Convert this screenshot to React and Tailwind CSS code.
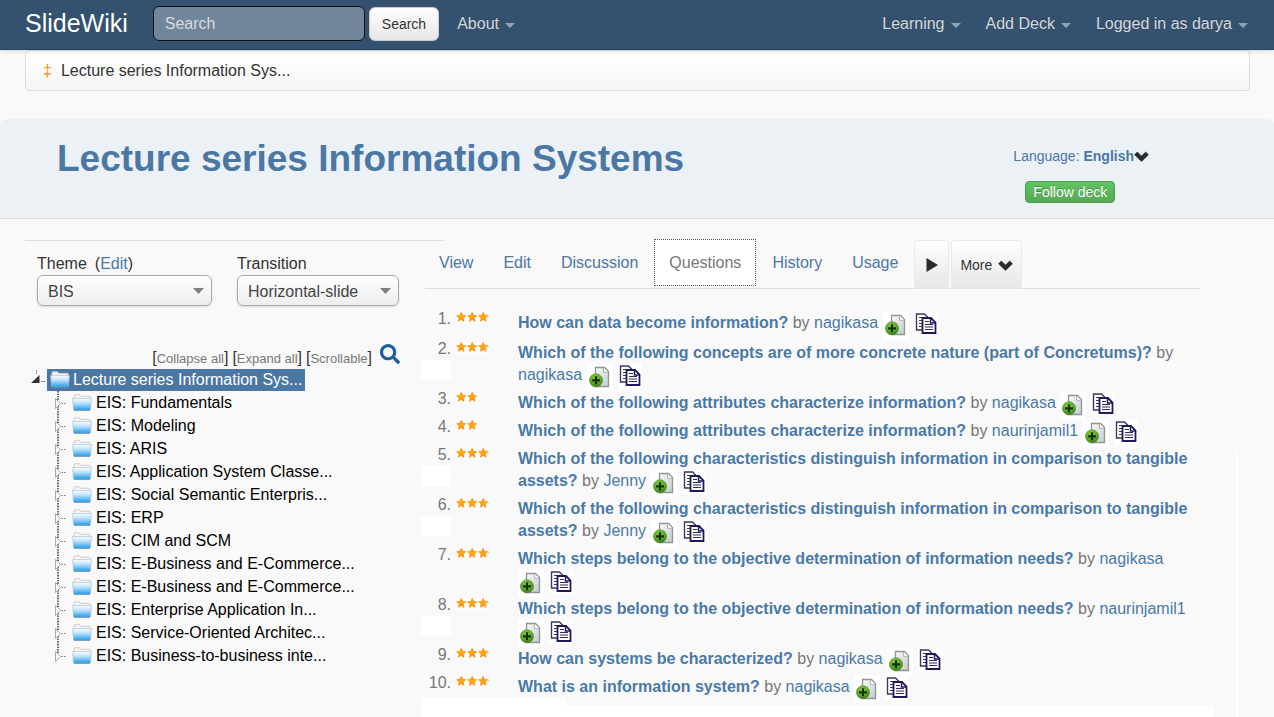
import React from "react";
import { FaSearch } from "react-icons/fa";

const questions = [
  { title: "How can data become information?", user: "nagikasa", stars: 3 },
  { title: "Which of the following concepts are of more concrete nature (part of Concretums)?", user: "nagikasa", stars: 3, filler: true },
  { title: "Which of the following attributes characterize information?", user: "nagikasa", stars: 2 },
  { title: "Which of the following attributes characterize information?", user: "naurinjamil1", stars: 2 },
  { title: "Which of the following characteristics distinguish information in comparison to tangible assets?", user: "Jenny", stars: 3, filler: true },
  { title: "Which of the following characteristics distinguish information in comparison to tangible assets?", user: "Jenny", stars: 3, filler: true },
  { title: "Which steps belong to the objective determination of information needs?", user: "nagikasa", stars: 3 },
  { title: "Which steps belong to the objective determination of information needs?", user: "naurinjamil1", stars: 3, filler: true },
  { title: "How can systems be characterized?", user: "nagikasa", stars: 3 },
  { title: "What is an information system?", user: "nagikasa", stars: 3 },
];

const chapters = [
  "EIS: Fundamentals",
  "EIS: Modeling",
  "EIS: ARIS",
  "EIS: Application System Classe...",
  "EIS: Social Semantic Enterpris...",
  "EIS: ERP",
  "EIS: CIM and SCM",
  "EIS: E-Business and E-Commerce...",
  "EIS: E-Business and E-Commerce...",
  "EIS: Enterprise Application In...",
  "EIS: Service-Oriented Architec...",
  "EIS: Business-to-business inte...",
];

function Caret() {
  return (
    <svg width="10" height="5" viewBox="0 0 10 5" className="mt-1 shrink-0" aria-hidden="true">
      <path d="M0 0h10L5 5z" fill="#93a3b3" />
    </svg>
  );
}

function Chevron() {
  return (
    <svg width="15" height="11" viewBox="0 0 15 11" className="shrink-0" aria-hidden="true">
      <path d="M.5 3.8 3.3 1l4.2 4L11.7 1l2.8 2.8-7 6.7z" fill="#2b2b2b" stroke="#2b2b2b" strokeWidth=".6" strokeLinejoin="round" />
    </svg>
  );
}

function Folder() {
  return (
    <svg width="20" height="18" viewBox="0 0 20 18" className="shrink-0" aria-hidden="true">
      <defs>
        <linearGradient id="folder" x1="0" y1="0" x2="0" y2="1">
          <stop offset="0" stopColor="#fafdff" />
          <stop offset=".4" stopColor="#bfe2fa" />
          <stop offset="1" stopColor="#1f9bec" />
        </linearGradient>
      </defs>
      <path d="M2 5V1.700Q2 .8 3 .8h4.200L9 2.300h8.300q1 0 1 1v2" fill="#f4f4f4" stroke="#c8c8c8" strokeWidth=".9" />
      <path d="M.6 4.500h18.800l-.9 10.800q0 .9-1 .9h-15q-1 0-1-.9z" fill="url(#folder)" stroke="#9dbdd4" strokeWidth=".6" />
      <path d="M2 16.300h16" stroke="#5d87a6" strokeWidth=".8" />
    </svg>
  );
}

function Stars({ count }) {
  return (
    <svg width={count === 3 ? 33 : 22} height="11" viewBox={count === 3 ? "0 1 33 11" : "0 1 22 11"} className="bg-white" role="img" aria-label={count + " stars"}>
      <defs>
        <linearGradient id="star" x1="0" y1="0" x2="0" y2="1">
          <stop offset="0" stopColor="#ff7a1a" />
          <stop offset=".5" stopColor="#ffb000" />
          <stop offset="1" stopColor="#ff7a1a" />
        </linearGradient>
      </defs>
      {[0, 1, 2].slice(0, count).map((i) => (
        <path
          key={i}
          transform={"translate(" + i * 11 + " 0)"}
          d="M5.200 1.200 6.600 4.300l3.300.4-2.600 2.300.8 3.400-2.900-1.800-2.900 1.800.8-3.400L.5 4.700l3.300-.4z"
          fill="url(#star)"
          stroke="#ff9020"
          strokeWidth=".7"
        />
      ))}
      {count === 3 && <path d="M32 5h1v1h-1z" fill="#ffb070" />}
    </svg>
  );
}

function AddIcon() {
  return (
    <svg width="26" height="27" viewBox="0 1 26 27" className="shrink-0 bg-white" aria-hidden="true">
      <defs>
        <linearGradient id="sheet" x1="0" y1="0" x2="1" y2="1">
          <stop offset="0" stopColor="#fafafa" />
          <stop offset="1" stopColor="#c3caca" />
        </linearGradient>
        <radialGradient id="ball" cx=".45" cy=".35" r=".7">
          <stop offset="0" stopColor="#8fd045" />
          <stop offset=".6" stopColor="#5aa822" />
          <stop offset="1" stopColor="#2f6d10" />
        </radialGradient>
      </defs>
      <path d="M8.500 4.500h9l4 4v15h-13z" fill="url(#sheet)" stroke="#8e9595" strokeWidth="1.300" />
      <path d="M16.500 4.800v4.500h4.700" fill="#fff" stroke="#a0a6a6" strokeWidth=".8" />
      <circle cx="9" cy="17.300" r="6.600" fill="url(#ball)" stroke="#5f8f3c" strokeWidth=".6" />
      <path d="M9 13.300v8M5 17.300h8" stroke="#14320a" strokeWidth="2.200" />
    </svg>
  );
}

function CopyIcon() {
  return (
    <svg width="24" height="24" viewBox="0 1 24 24" className="shrink-0 bg-white" aria-hidden="true">
      <path d="M2.500 3h8l3.500 3.500v12.500H2.500z" fill="#fff" stroke="#3a3764" strokeWidth="1.400" />
      <path d="M5 6.500h3.500M5 9.500h3.500M5 12.500h3.500M5 15.500h3.500" stroke="#3a3764" strokeWidth="1.200" />
      <path d="M8.500 7h8.500l4.500 4.500v10.500h-13z" fill="#fff" stroke="#1f1a5c" strokeWidth="1.800" />
      <path d="M16.500 7v5h5" fill="none" stroke="#1f1a5c" strokeWidth="1.500" />
      <path d="M11 10.500h4M11 13.500h8M11 16h8M11 18.500h8" stroke="#2f2b60" strokeWidth="1.200" />
    </svg>
  );
}

function NavItem({ children }) {
  return (
    <a href="#" className="flex items-center gap-1.5 text-[#d5d9dd] [text-shadow:0_-1px_0_rgba(0,0,0,0.25)]">
      {children}
      <Caret />
    </a>
  );
}

function Picker({ id, value, className }) {
  return (
    <div className={"relative " + className}>
      <select
        id={id}
        defaultValue={value}
        className="block h-[31px] w-full appearance-none rounded-md border border-[#aaa] bg-linear-to-b from-white via-[#f6f6f6] to-[#eee] px-2.5 pt-0.5 text-base text-[#444] shadow-sm"
      >
        <option>{value}</option>
      </select>
      <svg width="11" height="6" viewBox="0 0 11 6" className="pointer-events-none absolute top-[13px] right-2" aria-hidden="true">
        <path d="M0 0h11L5.500 6z" fill="#808080" />
      </svg>
    </div>
  );
}

function Tab({ children, active }) {
  return (
    <a
      href="#"
      className={
        active
          ? "h-[47px] border border-dotted border-[#555] bg-white px-3.5 leading-[45px] text-[#777]"
          : "h-[47px] px-3.5 leading-[47px]"
      }
    >
      {children}
    </a>
  );
}

function Sidebar() {
  return (
    <aside className="mt-px w-[418px] shrink-0 border-t border-[#ddd] pt-3 pl-3 text-[#333]">
      <div className="flex gap-[25px]">
        <div>
          <div className="flex gap-2 leading-[22px]">
            <label htmlFor="theme">Theme</label>
            <span>(<a href="#" className="text-[#4a79a8]">Edit</a>)</span>
          </div>
          <Picker id="theme" value="BIS" className="w-[175px]" />
        </div>
        <div>
          <label htmlFor="transition" className="block leading-[22px]">Transition</label>
          <Picker id="transition" value="Horizontal-slide" className="w-[162px]" />
        </div>
      </div>

      <div className="mt-[37px] flex h-[26px] justify-end gap-2 pr-[43px]">
        <div className="flex items-end gap-1 leading-[20px]">
          {["Collapse all", "Expand all", "Scrollable"].map((label) => (
            <span key={label}>
              [<button type="button" className="text-[13px] leading-[20px] text-[#777]">{label}</button>]
            </span>
          ))}
        </div>
        <button type="button" aria-label="Search the tree" className="flex h-[22px] items-center text-[#1c5c9f]">
          <FaSearch size={20} />
        </button>
      </div>

      <div className="-ml-1.5 text-black">
        <div className="flex h-[22px] items-center">
          <svg width="16" height="22" viewBox="0 0 16 22" aria-hidden="true">
            <path d="M5.500 1v5" stroke="#777" strokeDasharray="1.500 1" />
            <path d="M8.500 6v8H0z" fill="#333" />
            <path d="M10 12.500h4" stroke="#555" strokeDasharray="1.500 1" />
          </svg>
          <a href="#" className="flex h-[22px] items-center gap-[3px] bg-[#4b77a5] px-[3px] text-white">
            <Folder />
            Lecture series Information Sys...
          </a>
        </div>
        <ul className="pl-[22px]">
          {chapters.map((name, i) => (
            <li key={i} className="flex h-[23px] items-center">
              <svg width="19" height="23" viewBox="0 0 19 23" aria-hidden="true">
                <path d={i === chapters.length - 1 ? "M5 0v13" : "M5 0v23"} stroke="#444" strokeWidth="1.500" strokeDasharray="1.500 1" />
                <path d="M2.500 7.500v10l5-5z" fill="#f9f9f9" stroke="#aaa" />
                <path d="M8.500 12.500h5" stroke="#777" strokeDasharray="1.500 1" />
              </svg>
              <a href="#" className="flex items-center gap-1">
                <Folder />
                {name}
              </a>
            </li>
          ))}
        </ul>
      </div>
    </aside>
  );
}

function Question({ number, title, user, stars, filler }) {
  return (
    <li className="flex pb-1.5 first:pb-2 last:pb-0">
      <div className="flex w-[30px] shrink-0 flex-col items-end">
        <span className="-mt-1 leading-[22px] whitespace-nowrap">{number}.</span>
        {filler && <span className="h-5 w-[30px] bg-white" />}
      </div>
      <div className="w-[67px] shrink-0 pl-[5px]">
        <Stars count={stars} />
      </div>
      <div className="min-w-0 flex-1 leading-[22px]">
        <a href="#" className="font-bold text-[#4a79a8]">{title}</a> by{" "}
        <a href="#" className="text-[#4a79a8]">{user}</a>{" "}
        <span className="inline-flex h-[22px] items-start gap-[5px] align-top whitespace-nowrap">
          <button type="button" aria-label="Add question"><AddIcon /></button>
          <button type="button" aria-label="Copy question"><CopyIcon /></button>
        </span>
      </div>
    </li>
  );
}

export default function App() {
  return (
    <div className="min-h-screen bg-[#f9f9f9] font-['Liberation_Sans',Arial,sans-serif] text-base text-[#777]">
      <header className="relative flex h-[50px] items-center border-b border-[#2c4763] bg-[#34526f] pr-[26px] pb-0.5 pl-[25px] shadow-[0_1px_5px_rgba(0,0,0,0.15)]">
        <a href="#" className="pb-0.5 text-[25px] leading-[30px] text-white">SlideWiki</a>
        <form className="ml-[25px] flex items-center gap-1">
          <input
            type="search"
            aria-label="Search"
            placeholder="Search"
            className="h-[35px] w-[212px] rounded-md border border-[#111] bg-[#71869b] px-[11px] text-base text-white placeholder:text-[#d8dce0]"
          />
          <button type="button" className="h-[34px] rounded-md border border-[#ccc] bg-linear-to-b from-white to-[#e6e6e6] px-3 text-sm text-[#333]">
            Search
          </button>
        </form>
        <nav className="ml-[18px] flex flex-1 items-center justify-between">
          <NavItem>About</NavItem>
          <div className="flex gap-[25px]">
            <NavItem>Learning</NavItem>
            <NavItem>Add Deck</NavItem>
            <NavItem>Logged in as darya</NavItem>
          </div>
        </nav>
      </header>

      <nav aria-label="Breadcrumb" className="mr-6 ml-[25px] flex h-[41px] items-center gap-[9px] rounded border border-[#ddd] bg-linear-to-b from-white to-[#f5f5f5] px-[17px] text-[#333]">
        <span className="text-[#f89406]">‡</span>
        <a href="#">Lecture series Information Sys...</a>
      </nav>

      <section className="mt-7 flex h-[100px] justify-between rounded-t-md border-b border-[#ddd] bg-[#ecf1f6] pr-[125px] pl-[57px] text-[#4b77a5]">
        <h1 className="pt-5 text-[37px] leading-[40px] font-bold">Lecture series Information Systems</h1>
        <div className="pt-[27px] text-sm leading-[20px]">
          <button type="button" className="flex items-center">
            <span>Language: <b>English</b></span>
            <Chevron />
          </button>
          <button type="button" className="mt-[15px] ml-3 block h-[22px] rounded border border-[#46a04a] bg-linear-to-b from-[#62c462] to-[#57a957] px-[7px] leading-[20px] text-white [text-shadow:0_-1px_0_rgba(0,0,0,0.25)]">
            Follow deck
          </button>
        </div>
      </section>

      <div className="flex pt-5 pr-9 pl-[25px]">
        <Sidebar />
        <main className="relative -ml-[22px] min-w-0 flex-1">
          <div className="mr-[38px] ml-1 flex h-[50px] items-start gap-0.5 border-b border-[#ddd] text-[#4b77a5]">
            <Tab>View</Tab>
            <Tab>Edit</Tab>
            <Tab>Discussion</Tab>
            <Tab active>Questions</Tab>
            <Tab>History</Tab>
            <Tab>Usage</Tab>
            <button type="button" aria-label="Play" className="mt-px flex h-[49px] w-[35px] items-center justify-center rounded-t border border-b-0 border-[#eaeaea] bg-linear-to-b from-white to-[#e6e6e6]">
              <svg width="12" height="14" viewBox="0 0 12 14" aria-hidden="true">
                <path d="M.5 0v14L12 7z" fill="#2b2b2b" />
              </svg>
            </button>
            <button type="button" className="mt-px flex h-[49px] items-center gap-1.5 rounded-t border border-b-0 border-[#eaeaea] bg-linear-to-b from-white to-[#e6e6e6] px-2 text-sm text-[#333]">
              More
              <Chevron />
            </button>
          </div>
          <ol className="mr-[38px] pt-[23px]">
            {questions.map((q, i) => (
              <Question key={i} number={i + 1} {...q} />
            ))}
          </ol>
          <div className="h-2 w-36 bg-white" />
          <div className="mr-[25px] h-[11px] bg-white" />
          <div className="absolute top-[212px] right-0 bottom-0 w-0.5 bg-white" aria-hidden="true" />
        </main>
      </div>
    </div>
  );
}
